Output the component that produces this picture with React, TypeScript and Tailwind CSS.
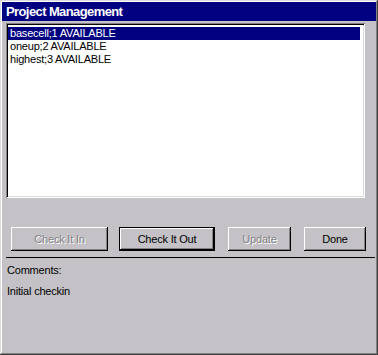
const items = [
  { name: 'basecell;1 AVAILABLE', selected: true },
  { name: 'oneup;2 AVAILABLE', selected: false },
  { name: 'highest;3 AVAILABLE', selected: false },
];

const raised =
  'shadow-[inset_-1px_-1px_#000,inset_1px_1px_#fff,inset_-2px_-2px_#838185]';

const Button = ({
  label,
  width,
  disabled,
  isDefault,
}: {
  label: string;
  width: string;
  disabled?: boolean;
  isDefault?: boolean;
}) => {
  if (isDefault) {
    return (
      <div className={`${width} h-[24px] border border-black`}>
        <div
          className={`w-full h-full flex items-center justify-center ${raised} text-black`}
        >
          {label}
        </div>
      </div>
    );
  }
  return (
    <div
      className={`${width} h-[24px] flex items-center justify-center ${raised} ${
        disabled ? 'text-[#838185] [text-shadow:1px_1px_0_#fff]' : 'text-black'
      }`}
    >
      {label}
    </div>
  );
};

export default function App() {
  return (
    <div
      className="w-[378px] h-[355px] bg-[#c4c2c6] p-[2px] flex flex-col shadow-[inset_-1px_-1px_#404040,inset_1px_1px_#dcdcdc,inset_-2px_-2px_#838185,inset_2px_2px_#fff] text-[11px] tracking-[-0.2px]"
      style={{ fontFamily: '"Liberation Sans", Arial, sans-serif' }}
    >
      {/* Title bar */}
      <div className="h-[19px] bg-[#000080] flex items-center pl-[4px] pt-[1px]">
        <span className="text-white font-bold text-[13px] tracking-[-0.6px]">
          Project Management
        </span>
      </div>

      {/* File list */}
      <div className="ml-[4px] mt-[2px] w-[359px] h-[175px] bg-white p-[2px] shadow-[inset_1px_1px_#838185,inset_-1px_-1px_#fff,inset_2px_2px_#000,inset_-2px_-2px_#dcdcdc]">
        <div className="pt-[2px] pr-[3px]">
          {items.map((item) => (
            <div
              key={item.name}
              className={`h-[13px] leading-[13px] pl-[2px] ${
                item.selected ? 'bg-[#000080] text-white' : 'text-black'
              }`}
            >
              {item.name}
            </div>
          ))}
        </div>
      </div>

      {/* Buttons */}
      <div className="flex mt-[29px]">
        <div className="ml-[9px]">
          <Button label="Check It In" width="w-[97px]" disabled />
        </div>
        <div className="ml-[11px]">
          <Button label="Check It Out" width="w-[96px]" isDefault />
        </div>
        <div className="ml-[13px]">
          <Button label="Update" width="w-[63px]" disabled />
        </div>
        <div className="ml-[13px]">
          <Button label="Done" width="w-[62px]" />
        </div>
      </div>

      {/* Separator */}
      <div className="ml-[4px] mr-[1px] mt-[6px] h-px bg-black" />

      {/* Comments */}
      <div className="pl-[5px] pt-[6px] text-black leading-[13px]">Comments:</div>
      <div className="pl-[5px] pt-[8px] text-black leading-[13px]">Initial checkin</div>
    </div>
  );
}
